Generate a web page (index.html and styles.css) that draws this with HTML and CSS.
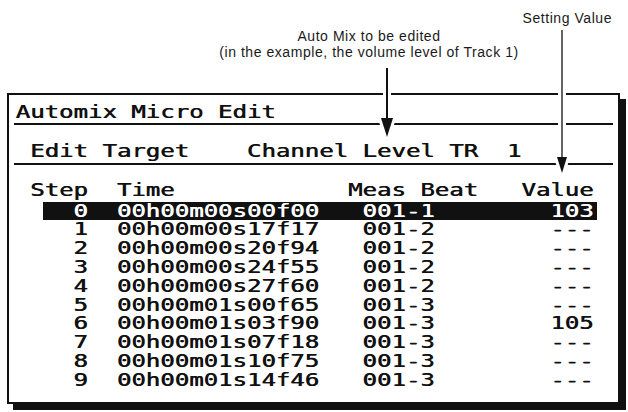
FILE: index.html
```html
<!DOCTYPE html>
<html>
<head>
<meta charset="utf-8">
<title>Automix Micro Edit</title>
<link rel="stylesheet" href="styles.css">
</head>
<body>
<div class="page">
  <div class="notes">
    <div class="note-value">Setting Value</div>
    <div class="note-target">
      <div class="note-line">Auto Mix to be edited</div>
      <div class="note-line">(in the example, the volume level of Track 1)</div>
    </div>
  </div>
  <div class="lcd">
    <div class="lcd-title"><span class="chars">Automix Micro Edit</span></div>
    <div class="lcd-target"><span class="chars">Edit Target    Channel Level TR  1</span></div>
    <div class="lcd-list">
      <div class="lcd-head"><span class="chars">Step  Time            Meas Beat   Value</span></div>
      <div class="lcd-row sel"><span class="chars">   0  00h00m00s00f00   001-1        103</span></div>
      <div class="lcd-row"><span class="chars">   1  00h00m00s17f17   001-2        ---</span></div>
      <div class="lcd-row"><span class="chars">   2  00h00m00s20f94   001-2        ---</span></div>
      <div class="lcd-row"><span class="chars">   3  00h00m00s24f55   001-2        ---</span></div>
      <div class="lcd-row"><span class="chars">   4  00h00m00s27f60   001-2        ---</span></div>
      <div class="lcd-row"><span class="chars">   5  00h00m01s00f65   001-3        ---</span></div>
      <div class="lcd-row"><span class="chars">   6  00h00m01s03f90   001-3        105</span></div>
      <div class="lcd-row"><span class="chars">   7  00h00m01s07f18   001-3        ---</span></div>
      <div class="lcd-row"><span class="chars">   8  00h00m01s10f75   001-3        ---</span></div>
      <div class="lcd-row"><span class="chars">   9  00h00m01s14f46   001-3        ---</span></div>
    </div>
  </div>
  <svg class="callouts" width="628" height="412" viewBox="0 0 628 412">
    <g class="knockout" stroke="#fff" fill="#fff">
      <line x1="387" y1="68" x2="387" y2="128" stroke-width="8"/>
      <polygon points="381,118 393,118 387,137" stroke-width="6" stroke-linejoin="round"/>
      <line x1="562" y1="30" x2="562" y2="160" stroke-width="8"/>
      <polygon points="557,157 567,157 562,173" stroke-width="6" stroke-linejoin="round"/>
    </g>
    <g class="ink" fill="#111" stroke="#111">
      <line x1="387" y1="68" x2="387" y2="124" stroke-width="2"/>
      <polygon points="381,118 393,118 387,137" stroke="none"/>
      <line x1="562" y1="30" x2="562" y2="160" stroke-width="1.3"/>
      <polygon points="557,157 567,157 562,173" stroke="none"/>
    </g>
  </svg>
</div>
</body>
</html>
```

FILE: styles.css
```css
html, body {
  margin: 0;
  padding: 0;
  background: #fff;
}

.page {
  position: relative;
  width: 628px;
  height: 412px;
  overflow: hidden;
  background: #fff;
}

.notes {
  height: 93px;
  box-sizing: border-box;
  padding-top: 10px;
  font-family: "Liberation Sans", Arial, sans-serif;
  font-size: 14px;
  letter-spacing: 0.55px;
  color: #1a1a1a;
}

.note-value {
  line-height: 16px;
  text-align: right;
  padding-right: 16px;
}

.note-target {
  margin-top: 1.5px;
  text-align: center;
  padding-left: 110px;
}

.note-line {
  line-height: 16.2px;
  height: 16.2px;
}

.lcd {
  box-sizing: border-box;
  margin-left: 7px;
  width: 613px;
  height: 311px;
  border: 2px solid #111;
  box-shadow: 6px 6px 0 #111;
  background: #fff;
  color: #111;
  font-family: "DejaVu Sans Mono", "Liberation Mono", monospace;
  font-size: 24px;
}

.chars {
  display: inline-block;
  white-space: pre;
  transform: scaleY(0.74);
  transform-origin: 50% 50%;
  text-shadow: 0.7px 0 0 currentColor;
}

.lcd-title {
  margin: 0 5px;
  padding: 7px 0 1px 1.5px;
  line-height: 20px;
  border-bottom: 2px solid #111;
}

.lcd-target {
  margin: 0 5px;
  padding: 16px 0 2px 16px;
  line-height: 20px;
  border-bottom: 2px solid #111;
}

.lcd-list {
  padding: 15.5px 0 0 21px;
}

.lcd-head {
  line-height: 19px;
  margin-bottom: 2.1px;
}

.lcd-row {
  line-height: 18.8px;
  height: 18.8px;
}

.lcd-row.sel {
  margin-left: 13px;
  width: 554px;
  background: #111;
  color: #fff;
}

.lcd-row.sel .chars {
  margin-left: -13px;
}

.callouts {
  position: absolute;
  left: 0;
  top: 0;
  pointer-events: none;
}
```
